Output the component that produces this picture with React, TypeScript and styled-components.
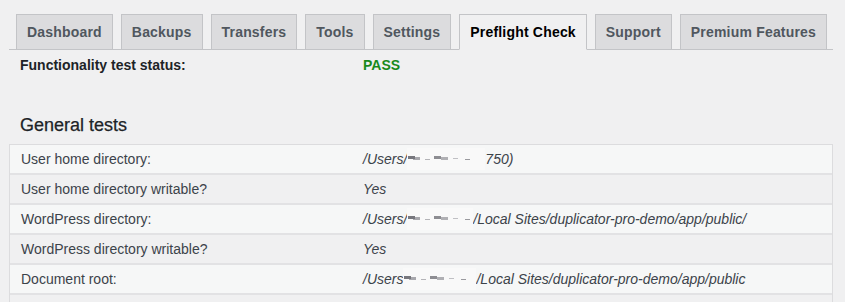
import React from 'react';
import styled, { createGlobalStyle } from 'styled-components';

const GlobalStyle = createGlobalStyle`
  html, body {
    margin: 0;
    padding: 0;
    background: #f0f0f1;
  }
  body {
    font-family: "Liberation Sans", Arial, sans-serif;
    font-size: 14px;
    color: #3c434a;
  }
`;

const Page = styled.div`
  padding: 14px 12px 0 9px;
  width: 824px;
  height: 302px;
  overflow: hidden;
`;

const TabBar = styled.nav`
  display: flex;
  border-bottom: 1px solid #c3c4c7;
  padding-left: 7px;
  gap: 8px;
`;

const Tab = styled.a<{ $active?: boolean }>`
  display: block;
  padding: 5px 10px;
  margin-bottom: -1px;
  font-size: 14px;
  line-height: 24px;
  font-weight: 700;
  letter-spacing: 0.19px;
  color: ${({ $active }) => ($active ? '#000' : '#50575e')};
  background: ${({ $active }) => ($active ? '#f0f0f1' : '#dcdcde')};
  border: 1px solid #c3c4c7;
  border-bottom-color: ${({ $active }) => ($active ? '#f0f0f1' : '#c3c4c7')};
  text-decoration: none;
  white-space: nowrap;
`;

const StatusRow = styled.div`
  display: grid;
  grid-template-columns: 343px 1fr;
  margin-top: 5px;
  line-height: 20px;
  font-weight: 700;
`;

const StatusLabel = styled.span`
  padding-left: 11px;
  color: #1d2327;
`;

const StatusValue = styled.span`
  padding-left: 11px;
  color: #188a1c;
`;

const Heading = styled.h3`
  margin: 38px 0 0 11px;
  font-size: 18px;
  line-height: 24px;
  font-weight: 400;
  color: #1d2327;
  -webkit-text-stroke: 0.25px #1d2327;
`;

const Table = styled.div`
  margin-top: 7px;
  border: 1px solid #dcdcde;
  border-bottom: none;
`;

const Row = styled.div<{ $odd: boolean }>`
  display: grid;
  grid-template-columns: 342px 1fr;
  height: 28px;
  align-items: center;
  background: ${({ $odd }) => ($odd ? '#f6f7f7' : '#f0f0f1')};
  border-bottom: 2px solid #e2e2e4;
`;

const Cell = styled.div<{ $italic?: boolean }>`
  padding-left: 11px;
  font-style: ${({ $italic }) => ($italic ? 'italic' : 'normal')};
  color: #3c434a;
  white-space: nowrap;
  display: flex;
  align-items: center;
`;

const Redacted = styled.span<{ $w: number }>`
  display: inline-block;
  width: ${({ $w }) => $w}px;
  height: 22px;
  background: #f9f9f9;
  position: relative;
  overflow: hidden;
  &::before {
    content: '';
    position: absolute;
    left: 1px;
    top: 8px;
    width: 7px;
    height: 3px;
    background: #77777d;
    box-shadow: 5px 1px 0 0 #a8a8ad, 16px 2px 0 -1px #b4b4b8, 26px 0 0 0 #8d8d92,
      33px 1px 0 0 #b0b0b4, 44px 1px 0 -1px #c0c0c4, 56px 2px 0 -1px #9a9a9f;
    filter: blur(0.5px);
  }
`;

type Value = { text: string } | { parts: [string, number, string] };

const rows: { label: string; value: Value }[] = [
  { label: 'User home directory:', value: { parts: ['/Users/', 78, '750)'] } },
  { label: 'User home directory writable?', value: { text: 'Yes' } },
  {
    label: 'WordPress directory:',
    value: { parts: ['/Users/', 66, '/Local Sites/duplicator-pro-demo/app/public/'] },
  },
  { label: 'WordPress directory writable?', value: { text: 'Yes' } },
  {
    label: 'Document root:',
    value: { parts: ['/Users', 73, '/Local Sites/duplicator-pro-demo/app/public'] },
  },
  { label: '', value: { text: '' } },
];

const tabs = [
  'Dashboard',
  'Backups',
  'Transfers',
  'Tools',
  'Settings',
  'Preflight Check',
  'Support',
  'Premium Features',
];

export default function App() {
  return (
    <>
      <GlobalStyle />
      <Page>
        <TabBar>
          {tabs.map((t) => (
            <Tab key={t} $active={t === 'Preflight Check'}>
              {t}
            </Tab>
          ))}
        </TabBar>
        <StatusRow>
          <StatusLabel>Functionality test status:</StatusLabel>
          <StatusValue>PASS</StatusValue>
        </StatusRow>
        <Heading>General tests</Heading>
        <Table>
          {rows.map((r, i) => (
            <Row key={i} $odd={i % 2 === 0}>
              <Cell>{r.label}</Cell>
              <Cell $italic>
                {'text' in r.value ? (
                  r.value.text
                ) : (
                  <>
                    {r.value.parts[0]}
                    <Redacted $w={r.value.parts[1]} />
                    {r.value.parts[2]}
                  </>
                )}
              </Cell>
            </Row>
          ))}
        </Table>
      </Page>
    </>
  );
}
